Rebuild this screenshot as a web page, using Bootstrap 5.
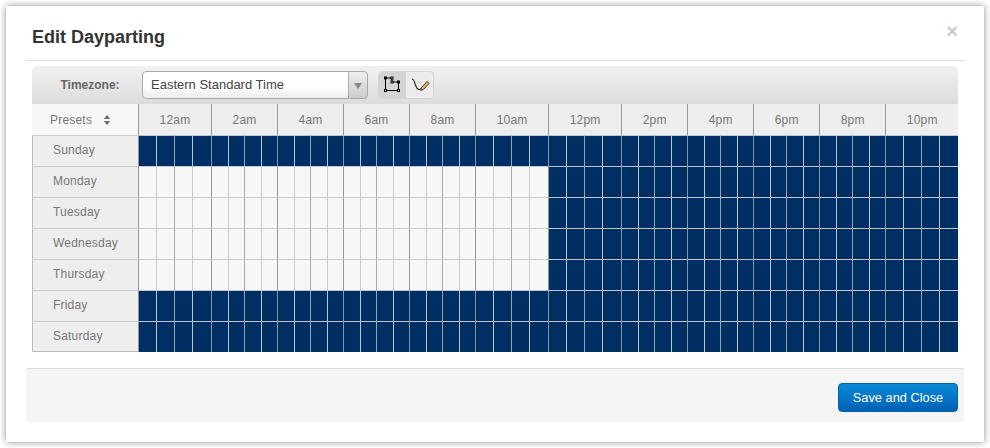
<!DOCTYPE html>
<html lang="en">
<head>
    <meta charset="UTF-8">
    <title>Edit Dayparting</title>
    <link href="https://cdn.jsdelivr.net/npm/bootstrap@5.3.0/dist/css/bootstrap.min.css" rel="stylesheet">
    <style>
        body {
            background: #fff;
            font-family: "Liberation Sans", Arial, sans-serif;
            font-size: 12px;
            color: #777;
            padding: 6px;
        }

        .dp-modal {
            width: 978px;
            height: 436px;
            padding: 0 20px;
            border: 0;
            border-radius: 0;
            box-shadow: 0 0 7px rgba(0, 0, 0, .45);
            background: #fff;
        }

        .dp-head {
            height: 55px;
            padding: 0 6px;
            border-bottom: 1px solid #ddd;
        }

        .dp-head h1 {
            font-size: 18px;
            font-weight: 700;
            color: #333;
            margin: 10px 0 0;
        }

        .dp-x {
            border: 0;
            background: none;
            padding: 0;
            font-size: 20px;
            font-weight: 700;
            line-height: 1;
            color: #ccc;
            margin: -4px 0 0 0;
        }

        .dp-body {
            padding: 5px 6px 0;
            height: 307px;
        }

        .dp-tools {
            height: 38px;
            border-radius: 5px 5px 0 0;
            background: linear-gradient(#f1f1f1, #dcdcdc);
        }

        .dp-tools label {
            width: 110px;
            padding-left: 6px;
            text-align: center;
            font-weight: 700;
            color: #666;
        }

        .tz-pick {
            width: 226px;
            height: 28px;
            flex-wrap: nowrap;
        }

        .tz-pick .form-control {
            font-size: 13px;
            line-height: 26px;
            padding: 0 8px;
            color: #444;
            border-color: #aaa;
            border-radius: 4px 0 0 4px;
            background: linear-gradient(#fff 55%, #ececec);
        }

        .tz-caret {
            width: 20px;
            padding: 0;
            border: 1px solid #aaa;
            border-radius: 0 4px 4px 0;
            background: linear-gradient(#eee, #ccc);
        }

        .tz-caret::after {
            content: "";
            display: inline-block;
            border: 4px solid transparent;
            border-top: 6px solid #888;
            border-bottom: 0;
        }

        .draw-tools {
            margin-left: 10px;
            height: 28px;
            border: 1px solid #d4d4d4;
            border-radius: 4px;
            background: #ececec;
            overflow: hidden;
        }

        .draw-tools .btn {
            width: 27px;
            height: 26px;
            padding: 0;
            border: 0;
            border-radius: 0;
            display: flex;
            align-items: center;
            justify-content: center;
        }

        .draw-tools .btn.active {
            background: #d4d4d4;
        }

        .dp-grid {
            width: 926px;
            table-layout: fixed;
            border-collapse: separate;
            border-spacing: 0;
            letter-spacing: .2px;
        }

        .dp-grid th, .dp-grid td {
            height: 31px;
            padding: 0;
            font-weight: 400;
            border-top: 1px solid #ccc;
        }

        .dp-grid thead th {
            background: #eee;
            text-align: center;
            border-top: 0;
            border-left: 1px solid #999;
            height: 31px;
        }

        .dp-grid thead .preset-cell {
            background: #f7f7f7;
            border-left: 0;
            padding-left: 18px;
            text-align: left;
        }

        .dp-grid tbody th {
            background: #eee;
            padding: 0 0 2px 20px;
            border-left: 1px solid #bbb;
        }

        .dp-grid tbody tr:last-child th {
            border-bottom: 1px solid #bbb;
        }

        .dp-grid td.on {
            background: #003063;
            border-top-color: #bcc5cf;
        }

        .dp-grid td.off {
            background: #f7f7f7;
        }

        .dp-grid td.line-q { border-left: 1px solid #ccc; }
        .dp-grid td.line-h { border-left: 1px solid #aaa; }
        .dp-grid td.line-m { border-left: 1px solid #999; }

        .dp-grid td.on.line-q { border-left-color: #bcc5cf; }
        .dp-grid td.on.line-h { border-left-color: #98a4b2; }
        .dp-grid td.on.line-m { border-left-color: #8a95a3; }

        .dp-foot {
            height: 54px;
            padding: 14px 6px 0 0;
            background: #f5f5f5;
            border-top: 1px solid #ddd;
        }

        .dp-save {
            width: 120px;
            height: 29px;
            padding: 0;
            font-size: 12.8px;
            color: #fff;
            border: 1px solid #0062a8;
            border-radius: 4px;
            background: linear-gradient(#0b8ad8, #0060b4);
        }
    </style>
</head>

<body>
    <div class="modal-content dp-modal">
        <div class="d-flex justify-content-between align-items-center dp-head">
            <h1>Edit Dayparting</h1>
            <button type="button" class="dp-x" aria-label="Close">&times;</button>
        </div>

        <div class="dp-body">
            <div class="d-flex align-items-center dp-tools">
                <label>Timezone:</label>
                <div class="input-group tz-pick">
                    <span class="form-control">Eastern Standard Time</span>
                    <button type="button" class="tz-caret" aria-label="Choose timezone"></button>
                </div>
                <div class="d-flex draw-tools">
                    <button type="button" class="btn active" aria-label="Polygon">
                        <svg width="20" height="20" viewBox="0 0 20 20" fill="none" stroke="#000">
                            <path d="M2.500 3H9V7H15.500V15.500H2.500Z" stroke-width="1"/>
                            <g fill="#fff" stroke-width="1">
                                <rect x="1.500" y="2" width="2" height="2"/>
                                <rect x="8" y="2" width="2" height="2"/>
                                <rect x="8" y="6" width="2" height="2"/>
                                <rect x="14.500" y="6" width="2" height="2"/>
                                <rect x="14.500" y="14.500" width="2" height="2"/>
                                <rect x="1.500" y="14.500" width="2" height="2"/>
                            </g>
                        </svg>
                    </button>
                    <button type="button" class="btn" aria-label="Freehand">
                        <svg width="22" height="20" viewBox="0 0 22 20" fill="none">
                            <path d="M3 4C5 4 5.500 7 6.500 10S8 14.500 10 14.500 11.500 14 12.500 13" stroke="#222" stroke-width="1.100"/>
                            <path d="M12.500 12.500L18 6.500 20 8.500 14.500 14.500 11.500 15.500Z" fill="#e0b050" stroke="#333" stroke-width=".9"/>
                        </svg>
                    </button>
                </div>
            </div>

            <table class="dp-grid">
                <colgroup id="dpCols"></colgroup>
                <thead>
                    <tr id="dpHours">
                        <th class="preset-cell">
                            Presets
                            <svg class="ms-2" width="6" height="10" viewBox="0 0 6 10" fill="#666"><path d="M3 0 6 4H0ZM3 10 0 6H6Z"/></svg>
                        </th>
                    </tr>
                </thead>
                <tbody id="dpRows"></tbody>
            </table>
        </div>

        <div class="d-flex justify-content-end align-items-start dp-foot">
            <button type="button" class="btn dp-save">Save and Close</button>
        </div>
    </div>

    <script src="https://cdn.jsdelivr.net/npm/bootstrap@5.3.0/dist/js/bootstrap.bundle.min.js"></script>
    <script>
    const hours = ['12am', '2am', '4am', '6am', '8am', '10am', '12pm', '2pm', '4pm', '6pm', '8pm', '10pm'];
    const days = ['Sunday', 'Monday', 'Tuesday', 'Wednesday', 'Thursday', 'Friday', 'Saturday'];
    const wide = [18, 18, 18, 19];
    const narrow = [17, 16, 17, 16];

    // first and last block of each half of the day is a bit wider
    function blockWidths(i) {
        return (i % 6 === 0 || i % 6 === 5) ? wide : narrow;
    }

    let cols = '<col style="width:106px">';
    hours.forEach((h, i) => {
        blockWidths(i).forEach(w => { cols += `<col style="width:${w}px">`; });
        document.getElementById('dpHours').insertAdjacentHTML('beforeend', `<th colspan="4">${h}</th>`);
    });
    document.getElementById('dpCols').innerHTML = cols;

    let rows = '';
    days.forEach((d, r) => {
        rows += `<tr><th>${d}</th>`;
        for (let c = 0; c < 48; c++) {
            const isOff = r >= 1 && r <= 4 && c < 24;
            const line = c % 4 === 0 ? 'line-m' : (c % 2 === 0 ? 'line-h' : 'line-q');
            rows += `<td class="${isOff ? 'off' : 'on'} ${line}"></td>`;
        }
        rows += '</tr>';
    });
    document.getElementById('dpRows').innerHTML = rows;
    </script>
</body>
</html>
